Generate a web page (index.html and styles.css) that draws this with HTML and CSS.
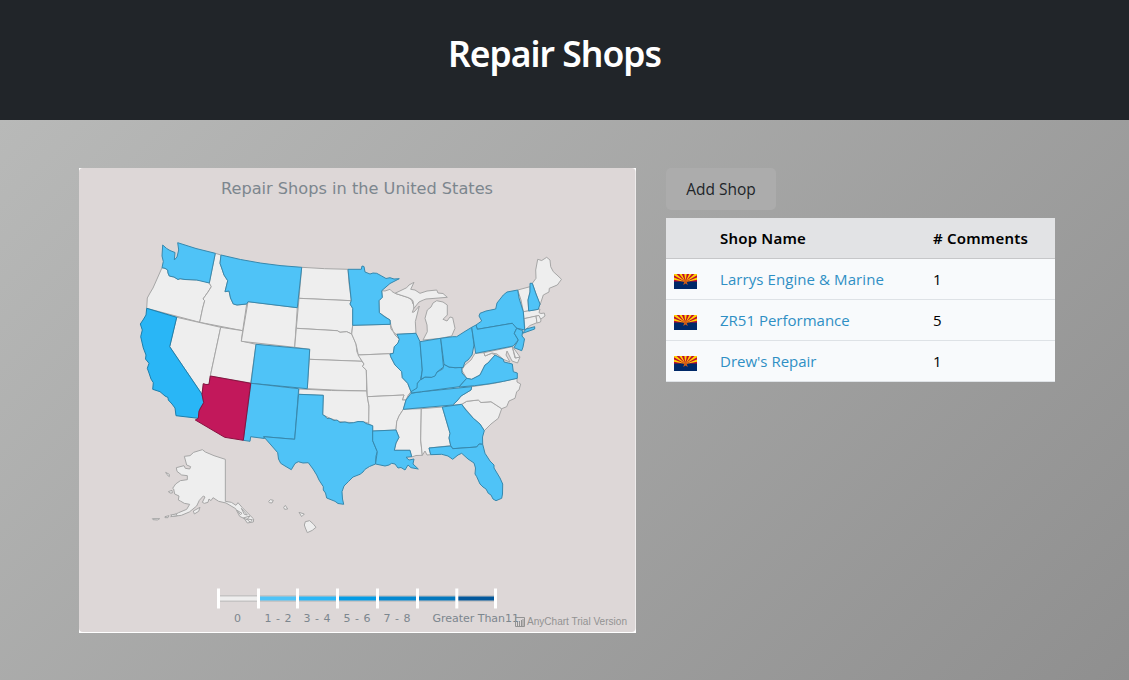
FILE: index.html
```html
<!DOCTYPE html>
<html lang="en">
<head>
<meta charset="utf-8">
<title>Repair Shops</title>
<link rel="stylesheet" href="styles.css">
</head>
<body>
<header class="banner"><h1 class="banner-title">Repair Shops</h1></header>
<main class="content">
<section class="map-card">
<svg class="map" viewBox="79 168 557 465" width="557" height="465">
<rect class="map-bg" x="79" y="168" width="556.500" height="464" rx="4"/>
<text class="map-title" x="221" y="194" textLength="272" lengthAdjust="spacingAndGlyphs">Repair Shops in the United States</text>
<g class="states">
<path d="M162 267.700 L165 268.300 167.700 270 168 273 169.300 276 171 276.500 174 277 178 279.500 180 278.700 185 279.500 190 279.700 196.700 280 201 280 209.300 283 211.300 286.700 208 292 203 299 204.700 300.700 202.700 308 199.700 322.300 146.700 308.300 147.300 298 150 293 153 288 157 279Z"/>
<path d="M215.300 253.300 L221 255 220 263.300 222 269 224 275 227.700 280.700 225 291.700 229 291 230.500 298 233.300 304 237 305 246.700 304 242.700 330.700 199.700 322.300 202.700 308 204.700 300.700 203 299 208 292 211.300 286.700 209.300 283Z"/>
<path d="M176.700 317.300 L220.700 327.300 218 340 210.300 376 209 384.300 206 384.800 203.300 383.700 202 394.300 169.700 346.700Z"/>
<path d="M220.700 327.300 L242.700 330.700 241.300 341 256 344.300 250.700 383 210.300 376Z"/>
<path d="M248 301.700 L297.300 307.700 294.700 347.300 241.300 341.300Z"/>
<path d="M301.700 267.300 Q324 269 348 269.300 L349 283 351.300 300.700 299 298.300Z"/>
<path d="M299 298.300 L351.300 300.700 350 304 352.700 308.300 352.700 325 351.700 334 346.700 331.700 340 332.300 337.300 330.700 296.300 328.300Z"/>
<path d="M296.300 328.300 L337.300 330.700 340 332.300 346.700 331.700 351.700 334 354 339 356 344 357 352 362 361.300 309.300 359.300 309.700 349.300 294.700 347.300Z"/>
<path d="M309.300 359.300 L362 361.300 364 364 362.500 366.500 366.300 370 366.700 391 Q337 390.500 307.300 388.700Z"/>
<path d="M299 389 Q330 391 366.700 391 L367.300 396 369 406.700 369 423.300 363.300 421.700 353.300 422.700 340 421.700 330 418.300 322.700 414.700 323.300 395.300 298.600 394.300Z"/>
<path d="M352.700 325.300 L390.300 324.300 391 329 393.300 331.700 395 335 399.300 339.300 398 343 394.300 346.700 393.300 353.300 390 353.700 358.300 355 356 344 351.700 334Z"/>
<path d="M358 355 L390 353.700 390.700 356.700 395 365 401.700 371.700 402.300 377.700 407.700 383.300 411 391.700 408.300 395 406 400 402.300 400 404 395 367.300 396.700 366.300 370 362.500 366.500 364 364Z"/>
<path d="M367.300 396.700 L404 395 402.300 400 406 400 403.300 409.300 399 416 396.700 421.700 396 430 372.700 431 372.700 426 368.700 424 369 406Z"/>
<path d="M403.300 409.300 L421.300 408.700 420.700 440 422.300 455.300 416 455.500 411.700 457 410 450.300 394.300 450.300 396 443 399 437.300 396 430 396.700 421.700 399 416Z"/>
<path d="M421.300 408.700 L442.300 407 450 433.300 449 438 450.700 445.700 429 448 430.700 454.700 427 455 425 451 422.300 455.300 420.700 440Z"/>
<path d="M461.700 404.300 L466.700 401.300 478.300 400 481 402.500 491 401.700 501.700 408.700 498.300 418.300 491 424 484.300 430.700 480 424 473.300 418.300Z"/>
<path d="M452.700 405 L457 401 461 396 471 390 471.700 386.700 Q495 384 517 378.300 L517 382 520.700 384 519 390 516.700 391.700 515 398.300 509 401 506.700 406.700 501.700 408.700 491 401.700 481 402.500 478.300 400 466.700 401.300 461.700 404.300Z"/>
<path d="M475 353.300 L484 352.700 485 356 491.700 353.300 495 355 488 363 485 365 480 375 471.700 379.300 466.700 378.300 461.700 370 465 365 471 360Z"/>
<path d="M484 352.700 L512.300 346.700 515 358 520 357 517.500 363 512 361 507 351 506 355 510 362 503.300 359.300 497 354 492 353 485 356Z"/>
<path d="M512.300 346.700 L515 350 520 357 515.500 358Z"/>
<path d="M381.700 290.700 L385 291 390 289.300 392 291.500 395 293.300 408 297.500 411.700 300 413 304 415 305 412.300 312.300 414 312 419.300 306 415.300 321.700 416 333.300 396 334.300 393.300 331.700 391 326 390 320 379.300 312.700 379 300.700 382.300 297.300Z"/>
<path d="M395 293.300 L406.700 287.700 409 285 414 282.300 410.700 289.300 415 290 420 293.300 427 291 436.700 290 438 293 443 293.500 447.300 297.300 435 298.300 426 299 423.300 300 419 302 414 308.300 413 301 411.700 299.300 408 297.500Z"/>
<path d="M423 340 L427.300 331.700 427 325 425 318.300 427.300 310 431 307 433 303 436.700 300.700 443 302 447.300 305 447.300 315 443 319.300 447 321 450 317 452.700 317.700 455 328.300 451.700 336 440.700 338.300Z"/>
<path d="M517.700 290 L530 286.700 530 292 528 300 528.700 311 523.300 311.700 521 300Z"/>
<path d="M532.300 283.300 L536 278.300 535.700 270 537.700 259.300 541.700 260.500 546.700 257.300 550 260 550.700 266.700 553.300 271.700 557 275 561.500 279.300 557.300 285 549.300 288.300 549 292 543.300 295 540 305Z"/>
<path d="M523.300 311.700 L538.300 309.300 540 309 539 312.700 541 313.500 544.300 313 545 316 541 319 537.300 316 524 318.700Z"/>
<path d="M524 318.700 L536 316 537 322.700 530 325.500 525 330Z"/>
<path d="M536 316 L539 315.500 541 320 540.500 322 537 323Z"/>
</g>
<g class="states low">
<path d="M162.700 245 L166.700 248.500 170 250.500 175 252.500 174.300 260 177 257 178.700 250 177.700 242.700 196 248.500 215.300 253.300 209.300 283 196.700 280 190 279.700 185 279.500 180 278.700 178 279.500 174 277 169.300 276 168 273 167.700 270 165 268.300 162 267.700 163.300 261.500 162 256Z"/>
<path d="M221 255 Q260 265 301.700 267.300 L297.300 307.700 248 301.700 246.700 304 237 305 233.300 304 230.500 298 229 291 225 291.700 227.700 280.700 224 275 222 269 220 263.300Z"/>
<path d="M256 344.300 L309.700 349.300 307.300 388.700 251 383.300Z"/>
<path d="M251 383.300 L298.700 388.700 294.700 439.300 263.700 436.700 264.500 438.500 250.700 436.700 250 441.300 243.300 440.300Z"/>
<path d="M298.600 394.300 L323.300 395.300 322.700 414.700 325 416 327 418.500 330 418.300 334 420.500 337 420 340 422.500 345 422 349 423 353.300 422.700 358 421.500 363.300 421.700 366 423.500 372.700 425.700 372.700 440.700 377.300 451.700 376 456 375.500 464 369.500 466.500 365 469.300 363 472 360 474.300 353 477 348.300 481.700 344 486 342 491.700 342.500 499 343.700 504.300 338 503.500 335 501.300 326.700 498 325.500 493 323.300 490 323.300 486.700 319 480 316.700 475 313 469 308.300 462.700 303 463 298.300 461.700 295 463.500 291.300 469.700 285 466 280.700 463.300 278.500 459 277.700 452.700 271 445 263.700 436.700 294.700 439.300Z"/>
<path d="M348 269.300 L361.300 269.300 362 266 364 266.500 365 272 370 274 373 273 376.700 273.300 381.700 276 386 278.500 390 277.700 394 279 399.300 278.700 390 283.500 381.700 290.700 382.300 297.300 379 300.700 379.300 312.700 385 317 390 320 390.300 324.300 352.700 325.300 352.700 308.300 350 304 351.300 300.700Z"/>
<path d="M372.700 431 L396 430 399 437.300 396 443 394.300 450.300 410 450.300 411.700 456.700 406 457.300 409 460 414 459 413 464 418.300 469 411 467.700 408 465 405 470 401 467.500 398 468 395 464 391.700 463.300 389 465 385 466 375.500 464 377.300 451.700 372.700 440.700Z"/>
<path d="M442.300 407 L461.700 404.300 465 409 473.300 418.300 480 424 484.300 430.700 482.500 437 482.700 444.300 479.500 444 476.700 447 452.700 448.700 450.700 445.700 449 438 450 433.300Z"/>
<path d="M429 448 L450.700 446 452.700 448.700 476.700 447 479 444 482.700 444.300 485 453.300 490 461 494 465 494 468 500 478 502.700 484 502.500 494 501.700 498.300 496 500.700 493 499 491 495 488.300 493.300 486 489 483 487 480 484 476.700 476.700 475 474 475.500 468 474 463 468 459 461.700 453.300 458 455 452.700 459.300 448 456 441.700 454.300 430.700 454.700Z"/>
<path d="M411 393.300 L421.700 391.700 471.700 386.700 471 390 461 396 457 401 452.700 405 403.300 409.300 406 400Z"/>
<path d="M411 393 L411.700 389.300 417 384 419 380 421.700 379.300 425 377 431.700 377.300 437 372 442.700 369 444 364.300 449 367 455 367.700 461.700 367.300 462 373 466.700 378.300 459.300 386.700 421.700 391.700Z"/>
<path d="M459 387 L466.700 378.300 471.700 379.300 480 375 483 369 485 365 488 363 495 355 503.300 359.300 504 362 512.300 364 513.300 371.700 517.300 373 517.300 378.300 Q490 385 459 387Z"/>
<path d="M397 334.300 L416 333.300 420 341.700 422.300 370 420.700 379.300 417.300 383.300 417 388 411 391.700 407.700 383.300 402.300 377.700 401.700 371.700 395 365 390.700 356.700 390 354 393.300 353.300 394.300 346.700 398 343 399.300 339.300Z"/>
<path d="M420 341.700 L440.700 338.300 443.500 367 437 372 435 376 431.700 377.300 425 377 421 379.300 422.300 370Z"/>
<path d="M440.700 338.300 L452.700 336.700 456.700 336.700 464 332 471.700 327.300 474 345 472 355 468 360 465 362 463 367.500 455 367.700 449 367 444 364.300Z"/>
<path d="M476 325 L481.700 321 479 316 480 313.300 486 311 495.700 309 497 303 503.300 295 507 292 517.700 290 519 298 523.300 311.700 524.700 330 516 328 512.300 323.300 477.300 329.300Z M522.700 333.300 L526 329 534.700 326.700 534.700 329Z"/>
<path d="M471.700 327.300 L476 325 477.300 329.300 512.300 323.300 516.700 328.300 514.300 333.300 518.300 340 513.300 346 475.700 353.300Z"/>
<path d="M516.700 328.300 L522.700 330.700 522 336 524.500 339 523 347 521.700 350.700 514 347.700 518.300 340 514.300 333.300Z"/>
<path d="M530 283.300 L532.300 283.300 536 294 540 304 538.300 309.300 528.700 311 528 300 530 292Z"/>
</g>
<path class="state mid" d="M146.700 308.300 L176.700 317.300 169.700 346.700 202 394.300 203.700 402.700 200 408.300 198.300 418.300 176 415.700 175 408 172 404 168.300 400 168 397.500 165 396 160 391.700 152.700 389.300 153.300 382.700 151 379 149 373 147.300 368.300 149 363.300 145.500 359 146 355 143.300 348 140.700 336.700 142.300 330 140.300 324 143 320 146 315Z"/>
<path class="state top" d="M210.300 376 L250.700 383.300 243.300 440.300 224.700 437.300 195.300 420 198.300 418.300 199 411 203.700 402.700 202 394.300 203.300 383.700 206 384.500 209 384.300Z"/>
<g class="states islands" transform="translate(140 440) scale(.33333)">
<path d="M256 58 L256 184 L274 187 288 196 294 188 307 203 341 237 340 246 322 249 313 236 299 229 287 206 258 189 236 184 219 173 213 182 207 177 204 187 193 190 187 187 195 171 190 168 178 181 170 198 148 216 124 226 92 230 116 218 140 208 149 193 133 190 121 183 115 180 117 168 104 162 101 147 98 145 107 132 121 122 142 119 142 107 125 105 111 94 109 83 132 77 136 85 149 87 152 80 140 75 133 49 150 47 161 37 187 29 196 36 222 47Z"/>
<path d="M160 213 L180 202 176 214 163 222Z M77 97 L88 103 88 110 81 104Z M85 155 L96 151 97 159 90 159Z M37 236 L59 236 52 240 39 239Z M75 230 L87 227 84 233 75 233Z M92 225 L108 222 112 227 97 229Z"/>
<path d="M291 211 L306 220 301 224Z M304 205 L322 225 313 223Z M310 234 L330 228 321 239Z M320 237 L337 239 331 247Z M386 184 L391 179 400 181 396 189 388 188Z M431 202 L436 196 443 207 434 208Z M477 217 L493 222 485 230Z M496 245 L509 242 521 253 528 262 517 271 502 278 496 264 493 255Z"/>
</g>
<g class="scale-shadow"><path d="M219 598.500H496"/></g>
<g class="scale">
<path class="s0" d="M219 598.500h39"/><path class="s1" d="M259 598.500h39"/><path class="s2" d="M298 598.500h40"/><path class="s3" d="M338 598.500h40"/><path class="s4" d="M378 598.500h39"/><path class="s5" d="M417 598.500h40"/><path class="s6" d="M457 598.500h38"/>
</g>
<path class="ticks" d="M218.500 588.500v20M258.500 588.500v20M297.500 588.500v20M337.500 588.500v20M377.500 588.500v20M417.500 588.500v20M456.800 588.500v20M495.500 588.500v20"/>
<g class="scale-labels">
<text x="234" y="622">0</text><text x="264.500" y="622" textLength="27">1 - 2</text><text x="303.500" y="622" textLength="27">3 - 4</text><text x="343.500" y="622" textLength="27">5 - 6</text><text x="383.500" y="622" textLength="27">7 - 8</text><text x="432.500" y="622" textLength="86.500">Greater Than11</text>
</g>
<path class="credit-icon" d="M515.500 617.500h9v9h-9zM517.500 626v-4M519.500 626v-5M521.500 626v-6M523 626v-7"/>
<text class="credit" x="527" y="625" textLength="100" lengthAdjust="spacingAndGlyphs">AnyChart Trial Version</text>
</svg>
</section>
<section class="shops">
<button class="add-shop">Add Shop</button>
<table class="shop-table">
<thead><tr><th class="flag-col"></th><th class="name-col">Shop Name</th><th># Comments</th></tr></thead>
<tbody>
<tr><td><svg class="flag" viewBox="0 0 23 15"><defs><g id="az"><path fill="#c00a2f" d="M0 0h23v8H0z"/><path fill="#ffd200" d="M11.500 8L0 5.800V3.400zM11.500 8L0 1.200V0H2.500zM11.500 8L5.300 0H7.800zM11.500 8L10.300 0h2.400zM11.500 8L15.200 0h2.500zM11.500 8L20.500 0H23v1.200zM11.500 8L23 3.400V5.800z"/><path fill="#002868" d="M0 7.500h23V15H0z"/><path fill="#ce5c17" d="M11.500 4.200l.9 2.500H15l-2.100 1.600.8 2.700-2.200-1.600L9.300 11l.8-2.700L8 6.700h2.600z"/></g></defs><use href="#az"/></svg></td><td><a class="link n1">Larrys Engine &amp; Marine</a></td><td>1</td></tr>
<tr><td><svg class="flag" viewBox="0 0 23 15"><use href="#az"/></svg></td><td><a class="link">ZR51 Performance</a></td><td>5</td></tr>
<tr><td><svg class="flag" viewBox="0 0 23 15"><use href="#az"/></svg></td><td><a class="link">Drew's Repair</a></td><td>1</td></tr>
</tbody>
</table>
</section>
</main>
</body>
</html>
```
FILE: styles.css
```css
* { box-sizing: border-box; }
body { margin: 0; height: 680px; overflow: hidden; display: flex; flex-direction: column; font: 16px/24px "Open Sans", "Noto Sans", sans-serif; color: #000; }
.banner { height: 120px; flex: none; background: #212529; color: #fff; padding: 29px 20px 0 0; text-align: center; }
.banner-title { margin: 0; font: 600 35.5px/48px "Noto Sans", sans-serif; letter-spacing: -1px; }
.content { flex: 1; display: flex; gap: 30px; align-items: flex-start; padding: 48px 74px 0 79px; background: linear-gradient(135deg, #b8b9b8, #8f8f8f); }
.map-card { width: 557px; height: 465px; background: #fff; flex: none; }
.map { display: block; }
.map-bg { fill: #ddd7d7; }
.map-title { font: 16px "DejaVu Sans", sans-serif; fill: #7c868e; }
.states path { fill: #eee; stroke: #a6a6a6; stroke-width: 1; stroke-linejoin: round; }
.low path { fill: #4fc3f7; stroke: #3788ad; }
.islands path { stroke-width: 3; }
.state { stroke-width: 1; stroke-linejoin: round; }
.mid { fill: #29b6f6; stroke: #1d7fac; }
.top { fill: #c2185b; stroke: #881140; }
.scale path { fill: none; stroke-width: 4; }
.scale-shadow path { stroke: #c6c4c4; stroke-width: 7; }
.scale .s0 { stroke: #eee; }
.scale .s1 { stroke: #4fc3f7; }
.scale .s2 { stroke: #29b6f6; }
.scale .s3 { stroke: #039be5; }
.scale .s4 { stroke: #0288d1; }
.scale .s5 { stroke: #0277bd; }
.scale .s6 { stroke: #01579b; }
.ticks { stroke: #fff; stroke-width: 3; }
.scale-labels { font: 11px "DejaVu Sans", sans-serif; fill: #7c868e; }
.credit { font: 10px "Liberation Sans", sans-serif; fill: #929292; }
.credit-icon { fill: none; stroke: #929292; stroke-width: 1; }
.shops { width: 389px; display: flex; flex-direction: column; align-items: flex-start; gap: 8px; }
.add-shop { width: 110px; height: 42px; padding: 0; border: 0; border-radius: 5px; background: #acacac; color: #212529; font: 15.5px/24px "Open Sans", sans-serif; }
.shop-table { width: 389px; border-collapse: separate; border-spacing: 0; table-layout: fixed; }
.shop-table th, .shop-table td { height: 41px; padding: 8px; border-bottom: 1px solid #dee2e6; text-align: left; vertical-align: middle; line-height: 24px; }
.shop-table th { background: #e2e3e5; border-bottom-color: #c6c7c9; font: 600 15px/24px "Noto Sans", sans-serif; letter-spacing: .2px; }
.shop-table td { background: #f8fafc; font-size: 15px; }
.flag-col { width: 46px; }
.name-col { width: 213px; }
.flag { display: block; width: 23px; height: 15px; margin-top: 5px; }
.link { color: #2f8fc4; white-space: nowrap; }
.n1 { letter-spacing: .08px; }
```
